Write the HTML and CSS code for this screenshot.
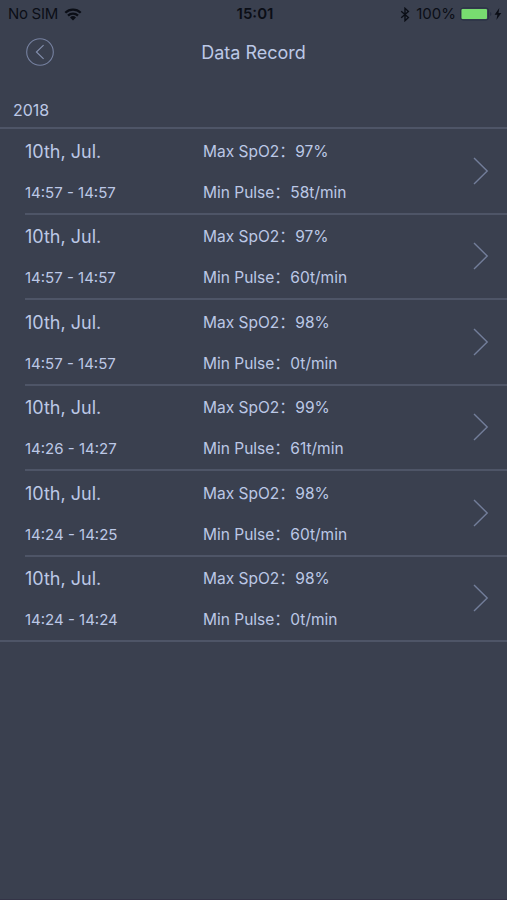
FILE: index.html
```
<!DOCTYPE html>
<html lang="en">
<head>
  <meta charset="utf-8">
  <title>Data Record</title>
  <link rel="stylesheet" href="styles.css">
</head>
<body>
  <div class="status-bar">
    <div class="status-left">
      <span class="carrier">No SIM</span>
      <svg class="wifi" width="18" height="13" viewBox="0 0 18 13">
        <path d="M1.3 4.7a11 11 0 0 1 15.4 0M4 7.6a7.2 7.2 0 0 1 10 0" fill="none" stroke="#0b0e16" stroke-width="2.3"/>
        <path d="M9 12.4L6 9.5a4.3 4.3 0 0 1 6 0z" fill="#0b0e16"/>
      </svg>
    </div>
    <span class="clock">15:01</span>
    <div class="status-right">
      <svg class="bluetooth" width="10" height="15" viewBox="0 0 10 15">
        <path d="M1.2 4.2L8.4 10.6 5 13.7V1.3l3.4 3.1-7.2 6.4" fill="none" stroke="#0b0e16" stroke-width="1.4"/>
      </svg>
      <span class="percent">100%</span>
      <svg class="battery" width="32" height="14" viewBox="0 0 32 14">
        <rect x="0.6" y="0.9" width="28" height="12.2" rx="2.6" fill="none" stroke="#293044" stroke-width="1"/>
        <rect x="1.5" y="2" width="25.5" height="10" rx="1" fill="#78dc70"/>
        <path d="M30 5v4q1.5-.6 1.5-2T30 5z" fill="#293044"/>
      </svg>
      <svg class="bolt" width="8" height="12" viewBox="0 0 8 12">
        <path d="M5.3 0L.6 6.8h2.8L2.4 12l4.9-7.1H4.5z" fill="#0b0e16"/>
      </svg>
    </div>
  </div>

  <div class="nav-bar">
    <a class="back" href="#">
      <svg width="28" height="28" viewBox="0 0 28 28" fill="none">
        <circle cx="14" cy="14" r="13.3" stroke="#7681a0" stroke-width="1.1"/>
        <path d="M17.6 7.2L10.4 14l7.2 6.9" stroke="#8590af" stroke-width="1.1"/>
      </svg>
    </a>
    <h1>Data Record</h1>
  </div>

  <h2 class="year">2018</h2>

  <ul class="records">
    <li class="record">
      <div class="when">
        <span class="date">10th, Jul.</span>
        <span class="time">14:57 - 14:57</span>
      </div>
      <div class="values">
        <span class="value">Max SpO2<span class="colon">：</span>97%</span>
        <span class="value">Min Pulse<span class="colon">：</span>58t/min</span>
      </div>
      <svg class="arrow" width="16" height="28" viewBox="0 0 16 28"><path d="M1 1l13.2 13L1 27"/></svg>
    </li>
    <li class="record">
      <div class="when">
        <span class="date">10th, Jul.</span>
        <span class="time">14:57 - 14:57</span>
      </div>
      <div class="values">
        <span class="value">Max SpO2<span class="colon">：</span>97%</span>
        <span class="value">Min Pulse<span class="colon">：</span>60t/min</span>
      </div>
      <svg class="arrow" width="16" height="28" viewBox="0 0 16 28"><path d="M1 1l13.2 13L1 27"/></svg>
    </li>
    <li class="record">
      <div class="when">
        <span class="date">10th, Jul.</span>
        <span class="time">14:57 - 14:57</span>
      </div>
      <div class="values">
        <span class="value">Max SpO2<span class="colon">：</span>98%</span>
        <span class="value">Min Pulse<span class="colon">：</span>0t/min</span>
      </div>
      <svg class="arrow" width="16" height="28" viewBox="0 0 16 28"><path d="M1 1l13.2 13L1 27"/></svg>
    </li>
    <li class="record">
      <div class="when">
        <span class="date">10th, Jul.</span>
        <span class="time">14:26 - 14:27</span>
      </div>
      <div class="values">
        <span class="value">Max SpO2<span class="colon">：</span>99%</span>
        <span class="value">Min Pulse<span class="colon">：</span>61t/min</span>
      </div>
      <svg class="arrow" width="16" height="28" viewBox="0 0 16 28"><path d="M1 1l13.2 13L1 27"/></svg>
    </li>
    <li class="record">
      <div class="when">
        <span class="date">10th, Jul.</span>
        <span class="time">14:24 - 14:25</span>
      </div>
      <div class="values">
        <span class="value">Max SpO2<span class="colon">：</span>98%</span>
        <span class="value">Min Pulse<span class="colon">：</span>60t/min</span>
      </div>
      <svg class="arrow" width="16" height="28" viewBox="0 0 16 28"><path d="M1 1l13.2 13L1 27"/></svg>
    </li>
    <li class="record">
      <div class="when">
        <span class="date">10th, Jul.</span>
        <span class="time">14:24 - 14:24</span>
      </div>
      <div class="values">
        <span class="value">Max SpO2<span class="colon">：</span>98%</span>
        <span class="value">Min Pulse<span class="colon">：</span>0t/min</span>
      </div>
      <svg class="arrow" width="16" height="28" viewBox="0 0 16 28"><path d="M1 1l13.2 13L1 27"/></svg>
    </li>
  </ul>
</body>
</html>
```
FILE: styles.css
```
* {
    box-sizing: border-box;
}
body {
    margin: 0;
    height: 900px;
    overflow: hidden;
    background-color: #3a404f;
    border-bottom: 1px solid #343447;
    color: #bcc8e6;
    font-family: Inter, "Noto Sans CJK SC", sans-serif;
}
.status-bar {
    display: grid;
    grid-template-columns: 1fr auto 1fr;
    align-items: center;
    height: 27px;
    padding: 0 5px 0 8px;
    color: #0b0e16;
    font-size: 15px;
    line-height: 28px;
}
.status-left, .status-right {
    display: flex;
    align-items: center;
}
.status-right {
    justify-content: flex-end;
}
.carrier {
    letter-spacing: -0.3px;
}
.wifi {
    margin-left: 6px;
}
.clock {
    font-weight: 600;
}
.percent {
    margin: 0 4px 0 6px;
}
.bolt {
    margin-left: 2px;
}

/* title is centred between two equal side columns */
.nav-bar {
    display: grid;
    grid-template-columns: 54px 1fr 54px;
    align-items: center;
    height: 50px;
}
.back {
    display: flex;
    justify-content: flex-end;
}
h1 {
    margin: 0;
    padding-top: 2px;
    font-size: 18px;
    font-weight: 400;
    line-height: 24px;
    text-align: center;
}
.year {
    height: 50px;
    margin: 0;
    padding: 23px 0 0 13px;
    font-size: 16px;
    font-weight: 400;
    line-height: 20px;
}

.records {
    margin: 0;
    padding: 0;
    list-style: none;
    border-top: 2px solid #4e5567;
    border-bottom: 2px solid #4e5567;
}
.record {
    display: flex;
    align-items: center;
    height: 85.5px;
    margin-left: 25px;
    padding-right: 18px;
    border-bottom: 2px solid #4e5567;
}
.record:last-child {
    height: 83.5px;
    border-bottom: none;
}
.when, .values {
    display: flex;
    flex-direction: column;
    gap: 17px;
    padding-top: 3px;
    line-height: 24px;
    white-space: nowrap;
}
.when {
    width: 178px;
}
.values {
    flex: 1;
    font-size: 15.5px;
}
.date {
    font-size: 18px;
}
.time {
    font-size: 15px;
}
.value {
    height: 24px;
}
.colon {
    display: inline-block;
    width: 16px;
    font-family: "Noto Sans CJK SC", sans-serif;
    line-height: 20px;
}
.arrow path {
    fill: none;
    stroke: #737e9a;
    stroke-width: 1.4;
}
```
